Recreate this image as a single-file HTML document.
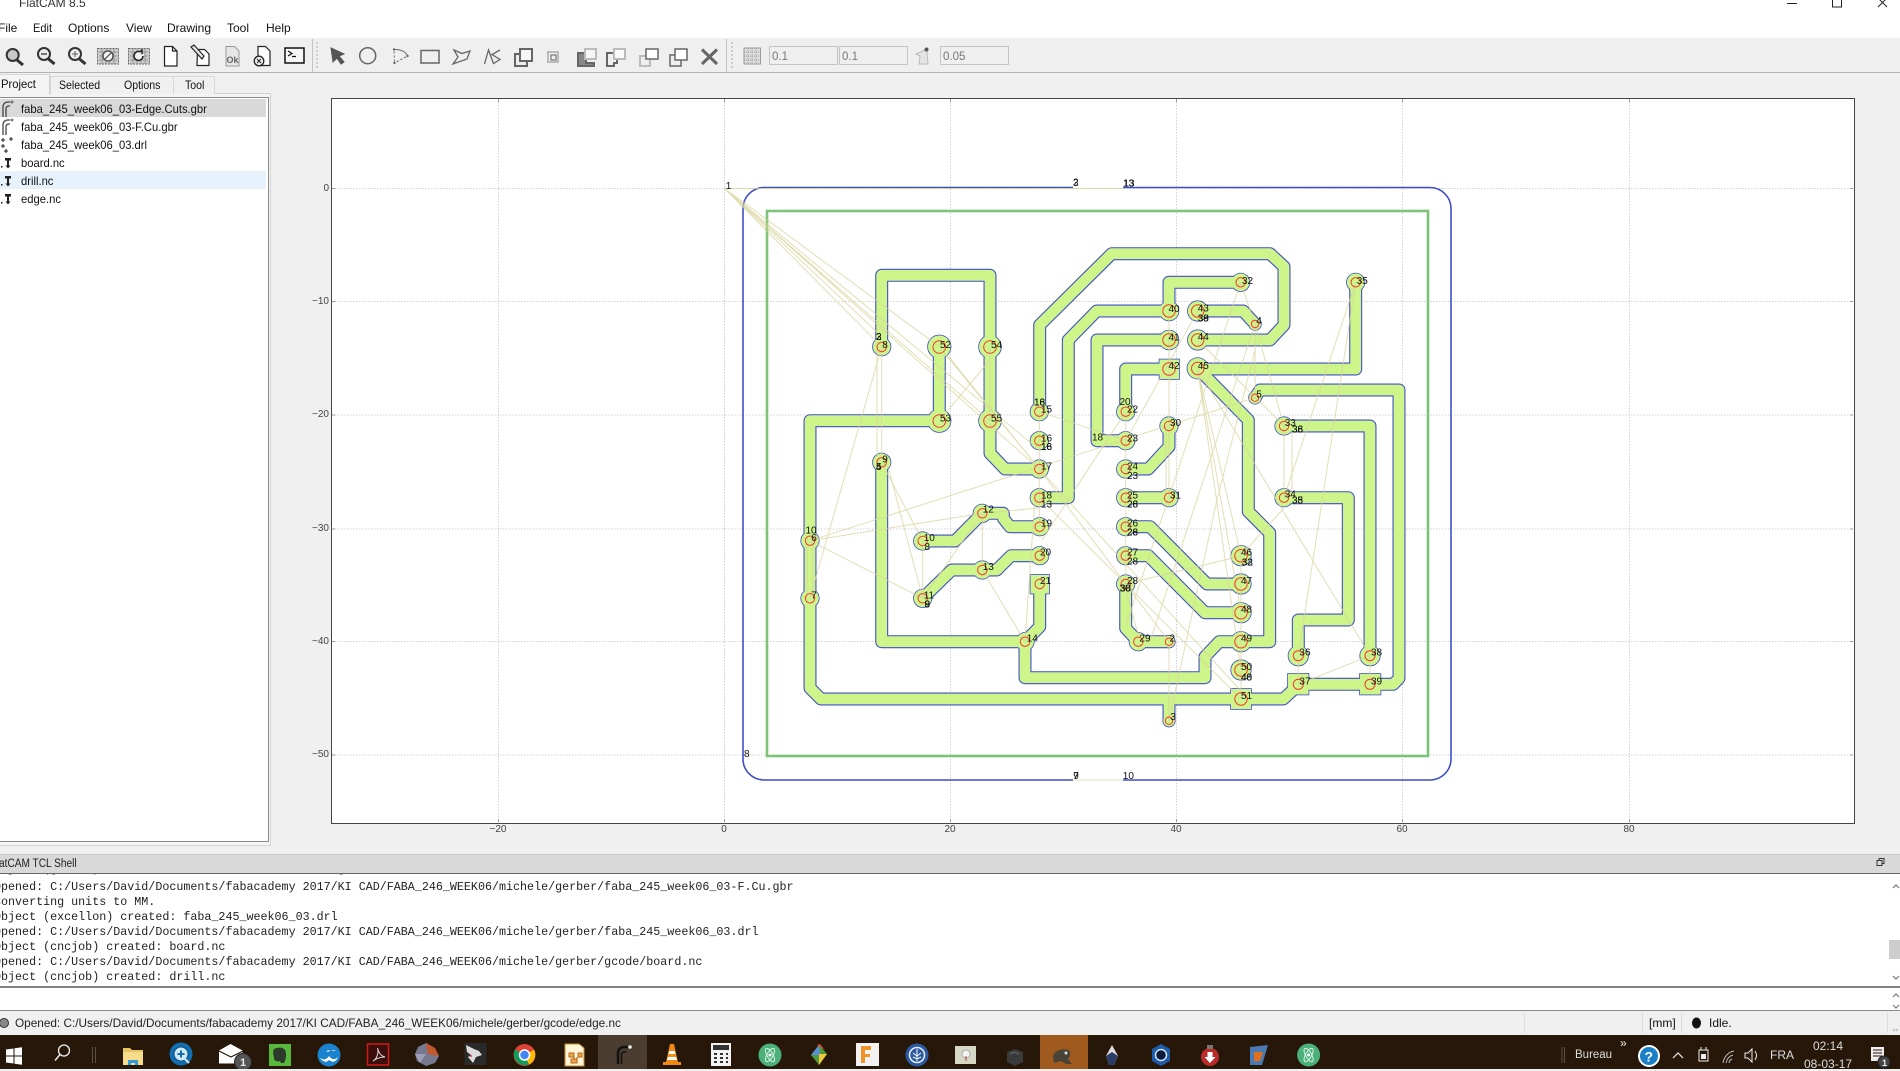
<!DOCTYPE html>
<html><head><meta charset="utf-8"><title>FlatCAM 8.5</title>
<style>
html,body{margin:0;padding:0;width:1900px;height:1069px;overflow:hidden;background:#f0f0f0;font-family:"Liberation Sans",sans-serif;font-size:12px;color:#111}
.a{position:absolute}
.t{position:absolute;white-space:nowrap;line-height:14px;height:14px;transform-origin:0 50%}
.m{position:absolute;left:-6px;white-space:pre;font-family:"Liberation Mono",monospace;font-size:11.7px;line-height:15px;height:15px;color:#222}
.r{transform:scaleX(.935)}
.b{transform:scaleX(.88)}
svg{position:absolute;left:0;top:0}
svg text{font-family:"Liberation Sans",sans-serif}
</style></head><body>
<!-- title + menu -->
<div class="a" style="left:0;top:0;width:1900px;height:38px;background:#fff"></div>
<div class="t" style="left:19px;top:-4px;font-size:12px;color:#333">FlatCAM 8.5</div>
<div class="t" style="left:-2px;top:21px">File</div>
<div class="t" style="left:33px;top:21px;transform:scaleX(.92)">Edit</div>
<div class="t" style="left:68px;top:21px">Options</div>
<div class="t" style="left:126px;top:21px">View</div>
<div class="t" style="left:167px;top:21px">Drawing</div>
<div class="t" style="left:227px;top:21px">Tool</div>
<div class="t" style="left:266px;top:21px">Help</div>
<!-- toolbar -->
<div class="a" style="left:0;top:39px;width:1900px;height:33px;background:#efefef;border-bottom:1px solid #b4b4b4"></div>
<div class="a" style="left:312px;top:39px;width:1px;height:33px;background:#c4c4c4"></div>
<div class="a" style="left:726px;top:39px;width:1px;height:33px;background:#c4c4c4"></div>
<div class="a" style="left:769px;top:46px;width:67px;height:17px;background:#efefef;border:1px solid #c4c4c4;color:#777;font-size:11.5px;line-height:20px;text-indent:2px">0.1</div>
<div class="a" style="left:839px;top:46px;width:67px;height:17px;background:#efefef;border:1px solid #c4c4c4;color:#777;font-size:11.5px;line-height:20px;text-indent:2px">0.1</div>
<div class="a" style="left:940px;top:46px;width:67px;height:17px;background:#efefef;border:1px solid #c4c4c4;color:#777;font-size:11.5px;line-height:20px;text-indent:2px">0.05</div>
<!-- tabs -->
<div class="a" style="left:0;top:93px;width:271px;height:753px;background:#f4f4f4;border-top:1px solid #d0d0d0;border-right:1px solid #d4d4d4;border-bottom:1px solid #d4d4d4;box-sizing:border-box"></div>
<div class="a" style="left:0;top:74px;width:49px;height:20px;background:#f4f4f4;border-right:1px solid #d0d0d0;border-top:1px solid #d8d8d8"></div>
<div class="a" style="left:50px;top:76px;width:62px;height:17px;background:#f0f0f0;border:1px solid #d8d8d8;border-bottom:0"></div>
<div class="a" style="left:113px;top:76px;width:60px;height:17px;background:#f0f0f0;border:1px solid #d8d8d8;border-bottom:0;border-left:0"></div>
<div class="a" style="left:174px;top:76px;width:40px;height:17px;background:#f0f0f0;border:1px solid #d8d8d8;border-bottom:0;border-left:0"></div>
<div class="t r" style="left:1px;top:77px">Project</div>
<div class="t b" style="left:59px;top:78px">Selected</div>
<div class="t b" style="left:124px;top:78px">Options</div>
<div class="t b" style="left:185px;top:78px">Tool</div>
<!-- tree -->
<div class="a" style="left:-1px;top:97px;width:268px;height:743px;background:#fff;border:1px solid #8a8a8a"></div>
<div class="a" style="left:0;top:99px;width:266px;height:18px;background:#d9d9d9"></div>
<div class="a" style="left:0;top:171px;width:266px;height:18px;background:#e5f1fb"></div>
<div class="t r" style="left:21px;top:102px">faba_245_week06_03-Edge.Cuts.gbr</div>
<div class="t r" style="left:21px;top:120px">faba_245_week06_03-F.Cu.gbr</div>
<div class="t r" style="left:21px;top:138px">faba_245_week06_03.drl</div>
<div class="t r" style="left:21px;top:156px">board.nc</div>
<div class="t r" style="left:21px;top:174px">drill.nc</div>
<div class="t r" style="left:21px;top:192px">edge.nc</div>
<!-- canvas -->
<div class="a" style="left:331px;top:98px;width:1522px;height:724px;background:#fff;border:1px solid #444"></div>
<div class="t" style="left:318px;top:182px;font-size:10px;color:#444;width:11px;text-align:right">0</div>
<div class="t" style="left:309px;top:295px;font-size:10px;color:#444;width:20px;text-align:right">−10</div>
<div class="t" style="left:309px;top:408px;font-size:10px;color:#444;width:20px;text-align:right">−20</div>
<div class="t" style="left:309px;top:522px;font-size:10px;color:#444;width:20px;text-align:right">−30</div>
<div class="t" style="left:309px;top:635px;font-size:10px;color:#444;width:20px;text-align:right">−40</div>
<div class="t" style="left:309px;top:748px;font-size:10px;color:#444;width:20px;text-align:right">−50</div>
<div class="t" style="left:488px;top:823px;font-size:10px;color:#444;width:20px;text-align:center">−20</div>
<div class="t" style="left:714px;top:823px;font-size:10px;color:#444;width:20px;text-align:center">0</div>
<div class="t" style="left:940px;top:823px;font-size:10px;color:#444;width:20px;text-align:center">20</div>
<div class="t" style="left:1166px;top:823px;font-size:10px;color:#444;width:20px;text-align:center">40</div>
<div class="t" style="left:1392px;top:823px;font-size:10px;color:#444;width:20px;text-align:center">60</div>
<div class="t" style="left:1619px;top:823px;font-size:10px;color:#444;width:20px;text-align:center">80</div>
<!-- shell -->
<div class="a" style="left:0;top:854px;width:1900px;height:19px;background:#d9d9d9;border-top:1px solid #c8c8c8;box-sizing:border-box"></div>
<div class="t b" style="left:-1px;top:857px;color:#222;font-size:11.5px">atCAM TCL Shell</div>
<div class="a" style="left:0;top:873px;width:1900px;height:115px;background:#fff;border-top:1px solid #666;border-bottom:2px solid #808080;box-sizing:border-box;overflow:hidden">
<div class="m" style="top:-12px">Object (gerber) created: faba_245_week06_03-F.Cu.gbr</div>
<div class="m" style="top:6px">Opened: C:/Users/David/Documents/fabacademy 2017/KI CAD/FABA_246_WEEK06/michele/gerber/faba_245_week06_03-F.Cu.gbr</div>
<div class="m" style="top:21px">Converting units to MM.</div>
<div class="m" style="top:36px">Object (excellon) created: faba_245_week06_03.drl</div>
<div class="m" style="top:51px">Opened: C:/Users/David/Documents/fabacademy 2017/KI CAD/FABA_246_WEEK06/michele/gerber/faba_245_week06_03.drl</div>
<div class="m" style="top:66px">Object (cncjob) created: board.nc</div>
<div class="m" style="top:81px">Opened: C:/Users/David/Documents/fabacademy 2017/KI CAD/FABA_246_WEEK06/michele/gerber/gcode/board.nc</div>
<div class="m" style="top:96px">Object (cncjob) created: drill.nc</div>
<div class="a" style="left:1889px;top:66px;width:11px;height:19px;background:#cdcdcd"></div>
</div>
<div class="a" style="left:0;top:988px;width:1900px;height:23px;background:#fff;border-bottom:1px solid #8a8a8a;box-sizing:border-box"></div>
<!-- status -->
<div class="t" style="left:15px;top:1016px;font-size:12px;color:#222;transform:scaleX(.982)">Opened: C:/Users/David/Documents/fabacademy 2017/KI CAD/FABA_246_WEEK06/michele/gerber/gcode/edge.nc</div>
<div class="a" style="left:1524px;top:1013px;width:1px;height:20px;background:#ddd"></div>
<div class="a" style="left:1642px;top:1013px;width:1px;height:20px;background:#ddd"></div>
<div class="a" style="left:1681px;top:1013px;width:1px;height:20px;background:#ddd"></div>
<div class="a" style="left:1887px;top:1013px;width:1px;height:20px;background:#ddd"></div>
<div class="t" style="left:1649px;top:1016px;color:#111">[mm]</div>
<div class="t" style="left:1709px;top:1016px;color:#111">Idle.</div>
<!-- taskbar -->
<div class="a" style="left:0;top:1035px;width:1900px;height:34px;background:#261708"></div>
<div class="a" style="left:598px;top:1035px;width:49px;height:34px;background:#4b3d2f"></div>
<div class="a" style="left:1040px;top:1035px;width:48px;height:34px;background:#a05a1e"></div>
<div class="t" style="left:1575px;top:1048px;color:#ddd;font-size:11.5px">Bureau</div>
<div class="t" style="left:1620px;top:1036px;color:#eee;font-size:12px">»</div>
<div class="t" style="left:1770px;top:1048px;color:#ddd;font-size:12px">FRA</div>
<div class="t" style="left:1813px;top:1039px;color:#ddd;font-size:12px">02:14</div>
<div class="t" style="left:1804px;top:1057px;color:#ddd;font-size:12px">08-03-17</div>

<svg width="1900" height="1069" viewBox="0 0 1900 1069" fill="none">
<!-- window buttons -->
<path d="M1787 3.500h10M1832.500 -2h9v9h-9zM1878 -2l9 9M1887 -2l-9 9" stroke="#222" stroke-width="1"/>
<!-- toolbar left icons -->
<g stroke="#333" stroke-width="2">
<circle cx="12.700" cy="55" r="6" fill="#c8c8c8"/><path d="M17 60l6 5" stroke-width="3"/>
<circle cx="44" cy="54" r="6" fill="#eee"/><path d="M48.500 59l6 5" stroke-width="3"/><path d="M41 54h6" stroke-width="1.300"/>
<circle cx="75" cy="54" r="6" fill="#eee"/><path d="M79.500 59l6 5" stroke-width="3"/><path d="M72 54h6M75 51v6" stroke-width="1.300" stroke="#777"/>
</g>
<rect x="97.500" y="48.500" width="21" height="15.500" fill="#ccc" stroke="#666" stroke-dasharray="2 1"/>
<path d="M99 52h18M99 56h18M99 60h18M102 49v15M106 49v15M110 49v15M114 49v15" stroke="#888" stroke-width=".7"/>
<circle cx="108" cy="56" r="5" fill="#f4f4f4" stroke="#444" stroke-width="1.300"/><path d="M105 59l6-6" stroke="#444" stroke-width="1.200"/>
<rect x="128.500" y="48.500" width="21" height="15.500" fill="#ccc" stroke="#666" stroke-dasharray="2 1"/>
<path d="M130 52h18M130 56h18M130 60h18M133 49v15M137 49v15M141 49v15M145 49v15" stroke="#888" stroke-width=".7"/>
<circle cx="139" cy="56" r="5" fill="#eee"/><path d="M143 56a4.500 4.500 0 1 1-3-4.300l2-1.500v4" stroke="#222" stroke-width="1.500"/>
<path d="M164.500 46.500h8l4.500 4.500v15h-12.500zM172.500 46.500v4.500h4.500" fill="#fff" stroke="#222" stroke-width="1.200"/>
<path d="M197.500 49.500h7l4.500 4.500v11.500h-12z" fill="#fff" stroke="#222" stroke-width="1.200"/>
<path d="M191 47l3-2 10 11-2 3z" fill="#e8e8e8" stroke="#222" stroke-width="1.200"/>
<path d="M226 46.500h8.500l4.500 4.500v15h-13z" fill="#e6e6e6" stroke="#999"/>
<text x="226.500" y="63" font-size="9" font-weight="bold" fill="#666">Ok</text>
<path d="M258 46.500h7.500l4.500 4.500v14.500h-12z" fill="#fff" stroke="#222" stroke-width="1.200"/>
<circle cx="259" cy="61" r="4.800" fill="#eee" stroke="#222" stroke-width="1.300"/><path d="M257 59l4 4M261 59l-4 4" stroke="#222"/>
<rect x="285" y="48" width="19" height="15" fill="#f6f6f6" stroke="#111" stroke-width="1.500"/>
<path d="M288 51l4 2.500-4 2.500M292 56.500h4" stroke="#111" stroke-width="1.200"/>
<path d="M317 42v28" stroke="#aaa" stroke-dasharray="2 2"/>
<path d="M732 42v28" stroke="#aaa" stroke-dasharray="2 2"/>
<!-- toolbar draw icons -->
<path d="M331 48l13 6-5 2 5 6-3 2-4-6-4 4z" fill="#555" stroke="#555"/>
<g stroke="#666" stroke-width="1.500">
<circle cx="367.700" cy="55.700" r="8"/>
<path d="M394 49.500C401 49 406 52 407.500 56M407.500 56L394.500 63M394 49.500L394.500 63" stroke-width="1" stroke-dasharray="0"/>
<path d="M394 49.500L394.500 63M407.500 56L394.500 63" stroke="#efefef" stroke-width="1.400" stroke-dasharray="2 2"/>
<circle cx="394" cy="49.500" r="1.200" fill="#666" stroke="none"/><circle cx="407.500" cy="56" r="1.200" fill="#666" stroke="none"/><circle cx="394.500" cy="63" r="1.200" fill="#666" stroke="none"/>
<rect x="421" y="50.500" width="18" height="12.500"/>
<path d="M454 50l8 3.500 8-2.500-3 8-14 5 5-7z" stroke-width="1.300"/>
<path d="M484.500 64l4-14 5 13.500 6.500-4-8-5 8-4.500" stroke-width="1.300"/>
</g>
<g stroke="#666" stroke-width="2">
<rect x="515" y="54" width="12" height="12" fill="#eee"/><rect x="520" y="49" width="12" height="12" fill="#f6f6f6"/>
<rect x="548" y="52" width="10" height="10" stroke="#bbb" fill="#eee"/><rect x="551" y="55" width="5" height="5" stroke-width="1.200" stroke="#777"/>
<path d="M578 53h8v10h8v3h-16z" fill="#888" stroke="#666"/><rect x="585" y="49" width="11" height="10" fill="#f6f6f6" stroke="#bbb"/>
<path d="M609 53h8v10h-3v3h-7v-13z" fill="#f0f0f0" stroke="#666"/><rect x="614" y="49" width="11" height="10" fill="#fafafa" stroke="#bbb"/>
<rect x="640" y="56" width="10" height="10" fill="#eee" stroke="#bbb"/><rect x="646" y="49" width="12" height="10" fill="#fff" stroke="#666" stroke-width="1.500"/>
<rect x="670" y="55" width="11" height="11" fill="#eee" stroke="#666" stroke-width="1.500"/><rect x="675" y="49" width="12" height="11" fill="#fff" stroke="#666" stroke-width="1.500"/>
<path d="M702 49.500l15 14.500M717 49.500l-15 14.500" stroke-width="3"/>
</g>
<rect x="744" y="48" width="16.500" height="16" fill="#ddd" stroke="#999"/>
<path d="M744 52h16M744 56h16M744 60h16M748 48v16M752 48v16M756 48v16" stroke="#888" stroke-width=".7" stroke-dasharray="1 1"/>
<path d="M916 54l9-4 2 2 1 12h-9l1-8z" fill="#e4e4e4" stroke="#bbb"/><circle cx="926.500" cy="49.500" r="2" fill="#555"/>
<!-- tree icons -->
<g stroke="#444" stroke-width="1.300">
<path d="M3 117v-10c0-3 2-5 5-5h2M6 117v-8c0-2 1-3 3-3h1" /><circle cx="12" cy="102" r="1" stroke-width=".8"/>
<path d="M3 135v-10c0-3 2-5 5-5h2M6 135v-8c0-2 1-3 3-3h1"/><circle cx="12" cy="120" r="1" stroke-width=".8"/>
</g>
<path d="M1 140h4M3 138v4M9 139h4M11 137v4M1 146h4M3 144v4M4 151h4M6 149v4" stroke="#222" stroke-width="1"/>
<g fill="#222"><path d="M5 158h6v2.500h-2v5h1.500l-2.500 3-2.500-3H7v-5H5z"/><rect x="1" y="166" width="1.500" height="1.500"/>
<path d="M5 176h6v2.500h-2v5h1.500l-2.500 3-2.500-3H7v-5H5z"/><rect x="1" y="184" width="1.500" height="1.500"/>
<path d="M5 194h6v2.500h-2v5h1.500l-2.500 3-2.500-3H7v-5H5z"/><rect x="1" y="202" width="1.500" height="1.500"/></g>
<!-- grid -->
<g stroke="#d2d2d2" stroke-width="1" stroke-dasharray="1.500 1.500">
<path d="M498.500 99V822M724.500 99V822M950.500 99V822M1176.500 99V822M1402.500 99V822M1629.500 99V822"/>
<path d="M332 188.500H1853M332 301.500H1853M332 415H1853M332 529H1853M332 641.500H1853M332 755H1853"/>
</g>
<g stroke="#999" stroke-width="1"><path d="M498.500 99v3M724.500 99v3M950.500 99v3M1176.500 99v3M1402.500 99v3M1629.500 99v3M498.500 819v3M724.500 819v3M950.500 819v3M1176.500 819v3M1402.500 819v3M1629.500 819v3M332 188.500h3M1850 188.500h3M332 301.500h3M1850 301.500h3M332 415h3M1850 415h3M332 529h3M1850 529h3M332 641.500h3M1850 641.500h3M332 755h3M1850 755h3"/></g>
<!-- board outlines -->
<rect x="767" y="211" width="661" height="545" stroke="#c4e6bc" stroke-width="3.400"/>
<rect x="767" y="211" width="661" height="545" stroke="#72bb72" stroke-width="1.700"/>
<path d="M1073 187.500H764a21 21 0 0 0-21 21V759a21 21 0 0 0 21 21H1073M1123 780H1430a21 21 0 0 0 21-21V208.500a21 21 0 0 0-21-21H1123" stroke="#3f4fc8" stroke-width="1.600"/>
<defs>
<g id="tr" stroke-linejoin="round" stroke-linecap="round">
<path d="M881.700 346.700V275.300H990V420.700V453.300L1005 469H1039.300"/>
<path d="M939.300 346.700V420.700H810V688L821 699H1241H1283.300L1296.700 686.700L1298.300 684.300H1370H1393.300L1399 678.300V390H1260L1255 397.700"/>
<path d="M1169 720.700V699"/>
<path d="M881.700 462.300V641.700H1025V677.700H1205V656.700L1219.300 641.700H1269.700V533L1248.300 511.500V420L1197.700 368.300"/>
<path d="M1025 641.700L1039.700 626.700V584"/>
<path d="M922.700 541H955L982.300 513.300H1003.300V518.300L1010 526.700H1039.700"/>
<path d="M922.700 598.300L951.700 570H996.700L1011 555.700H1039.700"/>
<path d="M1039.700 411.700V325L1111.700 253.700H1270L1284 266.700V325L1270 340H1197.700"/>
<path d="M1039.300 497.700H1068.300V340L1096.700 311H1169V282.300H1240.700"/>
<path d="M1169 340H1097V440.700H1125.700"/>
<path d="M1169 369H1125.700V411.700"/>
<path d="M1197.700 311H1243.300L1255 324"/>
<path d="M1197.700 369H1355.700V282.300"/>
<path d="M1169 426V446.700L1148.300 469H1125.700"/>
<path d="M1125.700 497.700H1169"/>
<path d="M1125.700 526.700H1150L1207 584H1241"/>
<path d="M1125.700 555.700H1148.300L1205 612.700H1241"/>
<path d="M1125.700 584V628.300L1138.300 641.700H1169"/>
<path d="M1284 426H1370V655.700"/>
<path d="M1284 497.700H1348.300V620H1298.300V655.700"/>
</g>
<g id="pd">
<circle cx="881.700" cy="346.700" r="8.800"/><circle cx="939.300" cy="346.700" r="11.300"/><circle cx="990" cy="346.700" r="11"/><circle cx="939.300" cy="420.700" r="11.300"/><circle cx="990" cy="420.700" r="11"/>
<circle cx="1039.300" cy="411.700" r="8.800"/><circle cx="1039.300" cy="440.700" r="8.800"/><circle cx="1039.300" cy="469" r="8.800"/><circle cx="1039.300" cy="497.700" r="8.800"/>
<circle cx="881.700" cy="462.300" r="8.800"/><circle cx="810" cy="540.700" r="8.800"/><circle cx="810" cy="598.300" r="8.800"/>
<circle cx="922.700" cy="541" r="8.800"/><circle cx="922.700" cy="598.300" r="8.800"/><circle cx="982.300" cy="513.300" r="8.800"/><circle cx="982.300" cy="570" r="8.800"/>
<circle cx="1039.700" cy="526.700" r="8.800"/><circle cx="1039.700" cy="555.700" r="8.800"/><circle cx="1025" cy="641.700" r="8.800"/>
<rect x="1030.500" y="575" width="18.500" height="18.500"/>
<circle cx="1169" cy="311" r="9.500"/><circle cx="1169" cy="340" r="9.500"/><rect x="1159.500" y="359.500" width="19.500" height="19.500"/>
<circle cx="1197.700" cy="311" r="9.800"/><circle cx="1197.700" cy="340" r="9.800"/><circle cx="1197.700" cy="368.300" r="10.300"/>
<circle cx="1240.700" cy="282.300" r="8.800"/><circle cx="1255" cy="324" r="6"/><circle cx="1255" cy="397.700" r="6"/>
<circle cx="1125.700" cy="411.700" r="8.800"/><circle cx="1125.700" cy="440.700" r="8.800"/><circle cx="1125.700" cy="469" r="8.800"/><circle cx="1125.700" cy="497.700" r="8.800"/><circle cx="1125.700" cy="526.700" r="8.800"/><circle cx="1125.700" cy="555.700" r="8.800"/><circle cx="1125.700" cy="584" r="8.800"/>
<circle cx="1169" cy="426" r="8.800"/><circle cx="1169" cy="497.700" r="8.800"/><circle cx="1138.300" cy="641.700" r="8.800"/><circle cx="1169" cy="641.700" r="5.800"/><circle cx="1169" cy="720.700" r="5.800"/>
<circle cx="1241" cy="555.700" r="9.800"/><circle cx="1241" cy="584" r="9.800"/><circle cx="1241" cy="612.700" r="9.800"/><circle cx="1241" cy="641.700" r="9.800"/><circle cx="1241" cy="670" r="9.800"/>
<rect x="1231" y="689" width="20" height="20"/>
<circle cx="1284" cy="426" r="8.800"/><circle cx="1284" cy="497.700" r="8.800"/><circle cx="1355.700" cy="282.300" r="8.800"/>
<circle cx="1298.300" cy="655.700" r="9.800"/><circle cx="1370" cy="655.700" r="9.800"/>
<rect x="1288" y="674" width="20.500" height="20.500"/><rect x="1360" y="674" width="20.500" height="20.500"/>
</g>
</defs>
<!-- traces -->
<use href="#tr" stroke="#3f4fc8" stroke-width="13"/>
<use href="#pd" fill="#3f4fc8" stroke="#3f4fc8" stroke-width="1.600"/>
<use href="#tr" stroke="#cdf58a" stroke-width="10.800"/>
<use href="#pd" fill="#cdf58a"/>
<!-- ratsnest -->
<g stroke="#d9d49c" stroke-width="1" opacity=".75">
<path d="M724 188.500L1123 188.500M1073 780H1123"/>
<path d="M724 188L881.700 346.700M724 188L880 335M724 188L939.300 346.700M724 188L990 420.700M724 188L1039.300 469M724 188L1039.300 450"/>
<path d="M881.700 346.700L810 598.300M877 346.700V462.300M881.700 346.700V462.300M881.700 462.300L922.700 541M889 470L922.700 598.300"/>
<path d="M810 540.700L1255 397.700M810 540.700L982.300 513.300L1039.700 508M810 540.700L922.700 598.300M807 540.700V598.300M813 540.700V598.300"/>
<path d="M922.700 541V598.300M982.300 513.300V570M982.300 570L1025 641.700M1035 497.700L1025 641.700M922.700 598.300L982.300 513.300"/>
<path d="M949 357L1039.300 469M990 360L939.300 420.700M939.300 346.700L1039.300 469M990 346.700V420.700"/>
<path d="M1039.300 411.700L1125.700 440.700M1125.700 411.700L1042 540M1125.700 411.700V584M1039.300 411.700V526.700M1169 311V369M1169 340V497.700M1197.700 311L1125.700 440.700M1166 426V497.700"/>
<path d="M1240.700 282.300L1125.700 626M1255 324L1150 641.700M1255 324V397.700M1255 324L1284 426M1197.700 340L1284 426M1240.700 282.300L1255 324"/>
<path d="M1197.700 369L1241 555.700M1197.700 369L1241 612.700M1197.700 369L1241 670M1197.700 369L1370 655.700"/>
<path d="M1355.700 282.300L1284 497.700M1355.700 282.300L1298.300 655.700M1169 720L1217 500L1255 350"/>
<path d="M1284 426V497.700M1292 432V497.700M1284 508L1241 555.700M1125.700 584L1241 556M1298.300 684.300L1370 655.700"/>
<path d="M1039.300 497.700L1241 699M1039.300 469L1240 690M1039.300 469L1169 641.700M1169 641.700V720.700M1241 555.700V699M1298.300 655.700V684.300M1370 655.700V684.300M1125.700 584L1169 641.700M1140 641L1125.700 590"/>
</g>
<!-- drills -->
<g stroke="#f03a2a" stroke-width="1">
<circle cx="881.700" cy="347" r="4.700"/><circle cx="939.300" cy="347" r="6.300"/><circle cx="990" cy="347" r="6.300"/><circle cx="939.300" cy="421" r="6.300"/><circle cx="990" cy="421" r="6.300"/>
<circle cx="1039.300" cy="411.700" r="4.700"/><circle cx="1039.300" cy="440.700" r="4.700"/><circle cx="1039.300" cy="469" r="4.700"/><circle cx="1039.300" cy="497.700" r="4.700"/>
<circle cx="881.700" cy="462.300" r="4.700"/><circle cx="810" cy="540.700" r="4.700"/><circle cx="810" cy="598.300" r="4.700"/><circle cx="922.700" cy="541" r="4.700"/><circle cx="922.700" cy="598.300" r="4.700"/><circle cx="982.300" cy="513.300" r="4.700"/><circle cx="982.300" cy="570" r="4.700"/>
<circle cx="1039.700" cy="526.700" r="4.700"/><circle cx="1039.700" cy="555.700" r="4.700"/><circle cx="1039.700" cy="584" r="4.700"/><circle cx="1025" cy="641.700" r="4.700"/>
<circle cx="1169" cy="311" r="6.200"/><circle cx="1169" cy="340" r="6.200"/><circle cx="1169" cy="369" r="6.200"/><circle cx="1197.700" cy="311" r="6.200"/><circle cx="1197.700" cy="340" r="6.200"/><circle cx="1197.700" cy="368.500" r="6.200"/>
<circle cx="1240.700" cy="282.300" r="4.700"/><circle cx="1255" cy="324" r="3.700"/><circle cx="1255" cy="397.700" r="3.700"/><circle cx="1355.700" cy="282.300" r="4.700"/>
<circle cx="1125.700" cy="411.700" r="4.700"/><circle cx="1125.700" cy="440.700" r="4.700"/><circle cx="1125.700" cy="469" r="4.700"/><circle cx="1125.700" cy="497.700" r="4.700"/><circle cx="1125.700" cy="526.700" r="4.700"/><circle cx="1125.700" cy="555.700" r="4.700"/><circle cx="1125.700" cy="584" r="4.700"/>
<circle cx="1169" cy="426" r="4.700"/><circle cx="1169" cy="497.700" r="4.700"/><circle cx="1138.300" cy="641.700" r="4.700"/><circle cx="1169" cy="641.700" r="3.700"/><circle cx="1169" cy="720.700" r="3.700"/>
<circle cx="1241" cy="555.700" r="6.200"/><circle cx="1241" cy="584" r="6.200"/><circle cx="1241" cy="612.700" r="6.200"/><circle cx="1241" cy="641.700" r="6.200"/><circle cx="1241" cy="670" r="6.200"/><circle cx="1241" cy="699" r="6.200"/>
<circle cx="1284" cy="426" r="4.700"/><circle cx="1284" cy="497.700" r="4.700"/><circle cx="1298.300" cy="655.700" r="5"/><circle cx="1370" cy="655.700" r="5"/><circle cx="1298.300" cy="684.300" r="5"/><circle cx="1370" cy="684.300" r="5"/>
</g>
<!-- labels -->
<g fill="#111" font-size="10">
<text x="725.700" y="189">1</text><text x="1073" y="186">3</text><text x="1073" y="185.500">2</text><text x="1123" y="186.500">13</text><text x="1123.500" y="186.500">13</text>
<text x="744" y="757">8</text><text x="1073.300" y="779">9</text><text x="1073.300" y="779">7</text><text x="1122.800" y="779">10</text>
<text x="882.200" y="348">8</text><text x="876" y="340">3</text><text x="876" y="340">2</text><text x="940" y="348">52</text><text x="991" y="348">54</text><text x="940" y="421.500">53</text><text x="991" y="421.500">55</text>
<text x="1034" y="405.300">16</text><text x="1034" y="405.300">18</text><text x="1041" y="412.700">15</text><text x="1041" y="441.700">16</text><text x="1041" y="450">18</text><text x="1041" y="450">16</text><text x="1041" y="469.300">17</text><text x="1041" y="498.300">18</text><text x="1041" y="507.300">13</text>
<text x="882.200" y="462.700">9</text><text x="876" y="470">5</text><text x="876" y="470">4</text>
<text x="1168.500" y="312">40</text><text x="1197.700" y="311.700">43</text><text x="1197.700" y="321.700">38</text><text x="1197.700" y="321.700">39</text><text x="1168.500" y="340.700">41</text><text x="1197.700" y="340">44</text><text x="1168.500" y="369">42</text><text x="1197.700" y="369">45</text><text x="1242" y="284">32</text><text x="1256.200" y="324">4</text><text x="1256.200" y="397.700">5</text>
<text x="1119.500" y="405">20</text><text x="1127" y="412.700">22</text><text x="1092" y="440.700">18</text><text x="1127" y="441.700">23</text><text x="1127" y="469.300">24</text><text x="1127" y="479">23</text><text x="1127" y="498.300">25</text><text x="1127" y="507.300">26</text><text x="1127" y="507.300">28</text><text x="1170" y="426">30</text><text x="1170" y="498.300">31</text>
<text x="1356.700" y="284">35</text><text x="1284.700" y="426">33</text><text x="1292" y="432.300">38</text><text x="1292" y="432.300">36</text><text x="1284.700" y="497.700">34</text><text x="1292" y="503.300">35</text><text x="1292" y="503.300">38</text>
<text x="805.500" y="533.300">10</text><text x="811.200" y="541">6</text><text x="811.200" y="598.300">7</text><text x="923.700" y="541">10</text><text x="924.500" y="550">8</text><text x="923.700" y="598.300">11</text><text x="924.500" y="607.300">8</text><text x="924.500" y="607.300">9</text>
<text x="982.700" y="512.700">12</text><text x="982.700" y="570">13</text><text x="1041" y="526.700">19</text><text x="1040" y="555.700">20</text><text x="1040" y="584">21</text><text x="1026.700" y="641.300">14</text>
<text x="1127" y="526.700">26</text><text x="1127" y="535.700">26</text><text x="1127" y="535.700">28</text><text x="1127" y="555.700">27</text><text x="1127" y="564.700">28</text><text x="1127" y="584">28</text><text x="1119.500" y="591.700">30</text><text x="1120" y="591.700">38</text><text x="1139.400" y="641.700">29</text><text x="1169.500" y="641.700">2</text><text x="1170.200" y="720">3</text>
<text x="1241" y="555.700">46</text><text x="1241.700" y="565.700">32</text><text x="1241.700" y="565.700">33</text><text x="1241" y="584">47</text><text x="1241" y="612.700">48</text><text x="1241" y="641.700">49</text><text x="1241" y="670">50</text><text x="1241" y="680.700">40</text><text x="1241" y="680.700">48</text><text x="1241" y="699">51</text>
<text x="1299.400" y="655.700">36</text><text x="1371" y="655.700">38</text><text x="1299.400" y="684.300">37</text><text x="1371" y="684.300">39</text>
</g>
<!-- shell misc -->
<path d="M1877 860.500h5v5h-5zM1879 860.500v-2h5v5h-2" stroke="#333" fill="#d9d9d9"/>
<g stroke="#777" stroke-width="1.200"><path d="M1893 888l3-3 3 3M1893 976l3 3 3-3M1893 997l3-3 3 3M1893 1005l3 3 3-3"/></g>
<circle cx="4" cy="1023" r="4.500" fill="#888" stroke="#333"/>
<ellipse cx="1696.500" cy="1023" rx="4.500" ry="5.500" fill="#111"/>
<path d="M1893 1031l2-2M1896 1031l2-2" stroke="#aaa"/>
<!-- taskbar icons -->
<g>
<path d="M6 1049.500l7.500-1v7h-7.500zM14.500 1048.300l7.500-1.100v8.300h-7.500zM6 1056.500h7.500v7l-7.500-1zM14.500 1056.500h7.500v8.300l-7.500-1.100z" fill="#fff"/>
<circle cx="64" cy="1050.500" r="5.500" stroke="#eee" stroke-width="1.300"/><path d="M60 1054.500l-5 6" stroke="#eee" stroke-width="1.500"/>
<path d="M92.500 1047v16M95.500 1047v16" stroke="#5c5044"/>
<path d="M123 1048h7l2 2h11v6h-20z" fill="#e8c560"/><path d="M123 1052h20v13h-20z" fill="#f7dd8b"/><path d="M128 1060h10v5h-3v-2h-4v2h-3z" fill="#2f9ad6"/>
<circle cx="181" cy="1054" r="11.500" fill="#0f6fb0"/><circle cx="181" cy="1054" r="7" fill="#cfe9f7" stroke="#0d4f80" stroke-width="1"/><path d="M177.500 1054h7M181 1050.500v7" stroke="#0f6fb0" stroke-width="2"/><path d="M185 1059l4 4" stroke="#cfe9f7" stroke-width="2"/>
<path d="M219 1050.500l11.500-6.500 12 6.500v13h-23.500z" fill="#fff"/><path d="M219 1051l12 6 12-6" stroke="#261708" stroke-width="1.200"/>
<circle cx="243" cy="1062" r="8.500" fill="#555" stroke="#222"/><text x="240" y="1066" font-size="11" font-weight="bold" fill="#eee">1</text>
<rect x="269" y="1044" width="22" height="22" fill="#57b83d"/><path d="M274 1049c4-2 9-2 11 1 2 4 1 9-1 13h-3l-1-2c-3 1-6 0-6-3 0-3-2-5 0-9z" fill="#2d3a2a"/>
<circle cx="329" cy="1055" r="11.500" fill="#1b82cf"/><path d="M320 1058c4 2 6 2 9-2 3 4 6 4 9 1-2 5-5 6-9 3-3 3-6 2-9-2zM326 1051l5-1-3 2zM332 1050l4 0-3 1z" fill="#fff"/>
<rect x="367.500" y="1044" width="21" height="21" fill="#3b0d0d" stroke="#d21919" stroke-width="1.500"/><path d="M373 1061c4-2 6-9 4.500-13 1 4 3 8 7.500 9-4 0-8 1-12 4z" stroke="#ddd" stroke-width="1"/>
<path d="M426 1043l9 5 4 8-4 7-9 3-9-5-2-7 3-7z" fill="#77788e"/><path d="M426 1043l9 5 4 8-11-2z" fill="#c4572c"/><path d="M415 1054l11 0-6 9z" fill="#9ea0b8"/>
<rect x="464.500" y="1043" width="22" height="22" fill="#2a2a2a"/><path d="M466 1045l8 4 5 2 3 4-6 2-3 6-5-6 3-2-4-3z" fill="#ddd"/><circle cx="471" cy="1056" r="1" fill="#e03060"/>
<circle cx="524.500" cy="1055" r="11" fill="#db4437"/><path d="M534 1049.500a11 11 0 0 1-5 15l-4.500-9z" fill="#fbbc05"/><path d="M515 1049.500a11 11 0 0 0 14 15l-4.500-9.500z" fill="#0f9d58"/><circle cx="524.500" cy="1055" r="5" fill="#4285f4" stroke="#fff" stroke-width="1.500"/>
<path d="M565 1044h14l5 4v18h-19z" fill="#fff4d8" stroke="#c98a2a"/><path d="M569 1053h5v4h-5zM578 1053h4v4h-4zM571 1059h6v4h-6zM573 1057l2 2M578 1057l-2 2" stroke="#b46a1a" fill="#e6a548"/>
<path d="M618 1064v-11c0-4 3-6 6-6h4" stroke="#111" stroke-width="2.500"/><path d="M621.500 1064v-9c0-2 1-3 3-3h2" stroke="#111" stroke-width="1.500"/><circle cx="630" cy="1047" r="1.800" fill="#eee"/>
<path d="M666 1062l4-18h4l4 18h3v3h-18v-3z" fill="#f08a14"/><path d="M669.500 1051h5l1 3h-7zM668 1057h8l1 3h-10z" fill="#fff"/>
<rect x="711" y="1043" width="20" height="23" fill="#f3f3f3"/><rect x="713" y="1045" width="16" height="5" fill="#333"/><path d="M714 1053h3v2h-3zM720 1053h3v2h-3zM726 1053h2v2h-2zM714 1057h3v2h-3zM720 1057h3v2h-3zM726 1057h2v2h-2zM714 1061h3v2h-3zM720 1061h3v2h-3zM726 1061h2v2h-2z" fill="#333"/>
<circle cx="770" cy="1055" r="11.500" fill="#4cb07a"/><ellipse cx="770" cy="1055" rx="7.500" ry="3" stroke="#d8f2e2" transform="rotate(60 770 1055)"/><ellipse cx="770" cy="1055" rx="7.500" ry="3" stroke="#d8f2e2" transform="rotate(-60 770 1055)"/><circle cx="770" cy="1055" r="1.500" fill="#fff"/>
<path d="M819 1045l8 9-8 11-8-10z" fill="#4f9a3a"/><path d="M811 1055l8-10 1 10z" fill="#5b8fd8"/><path d="M819 1065l8-11h-8z" fill="#f0c840"/><path d="M817 1045l3-1 5 6z" fill="#d84a32"/>
<rect x="856" y="1043" width="23" height="23" fill="#f2f2f2"/><path d="M861 1046h10v4h-6v4h5v3h-5v6h-4z" fill="#f0932a"/>
<circle cx="917" cy="1055" r="11.500" fill="#2c5aa0"/><circle cx="917" cy="1055" r="7.500" stroke="#e8eef8" stroke-width="1.500"/><path d="M917 1049v12M913 1053l4 3 4-3M913 1057l4 2 4-2" stroke="#fff"/>
<rect x="955" y="1046" width="21" height="18" fill="#d5d8c2"/><circle cx="966" cy="1054" r="4" fill="#f3f3f3" stroke="#aaa"/><path d="M966 1056v5" stroke="#c33"/>
<path d="M1007 1052l8-3 8 3v10l-8 4-8-4z" fill="#3a3a3a"/><path d="M1010 1054l4-2 5 2" stroke="#666"/>
<path d="M1053 1056c2-6 10-8 15-6 3 1 3 6 0 9l4 5h-6l-5-3-7 2z" fill="#4a4438"/><circle cx="1066" cy="1053" r="1.500" fill="#ddd"/>
<path d="M1112 1045l6 11-4 9h-5l-3-9z" fill="#ddd"/><path d="M1112 1052l6 4-4 9h-5l-3-9z" fill="#2b3c66"/>
<path d="M1161 1044l9 5v12l-9 5-9-5v-12z" fill="#1e5aa8"/><circle cx="1161" cy="1055" r="5.500" fill="#0a1a38" stroke="#cfe4ff" stroke-width="1.500"/>
<circle cx="1210" cy="1057" r="9" fill="#b92b2b"/><rect x="1207" y="1045" width="6" height="4" fill="#777"/><path d="M1207.500 1052h5v5h3l-5.500 6-5.500-6h3z" fill="#fff"/>
<path d="M1250 1047l18 -2-6 20-12 0z" fill="#4a7ab0"/><path d="M1254 1052h9l-3 9h-6z" fill="#e07020"/>
<circle cx="1308.600" cy="1055" r="11.500" fill="#4cb07a"/><ellipse cx="1308.600" cy="1055" rx="7.500" ry="3" stroke="#d8f2e2" transform="rotate(60 1308.600 1055)"/><ellipse cx="1308.600" cy="1055" rx="7.500" ry="3" stroke="#d8f2e2" transform="rotate(-60 1308.600 1055)"/><circle cx="1308.600" cy="1055" r="1.500" fill="#fff"/>
<path d="M1562 1047v16M1564.500 1047v16" stroke="#5c5044"/>
<circle cx="1649" cy="1056" r="11" fill="#fff"/><circle cx="1649" cy="1056" r="9" fill="#1a7fc7"/><text x="1644.500" y="1061.500" font-size="14" font-weight="bold" fill="#fff">?</text>
<path d="M1673 1058l5-5 5 5" stroke="#eee" stroke-width="1.200"/>
<rect x="1699" y="1050" width="9" height="11" stroke="#eee"/><rect x="1701" y="1054" width="5" height="5" fill="#eee"/><path d="M1701 1047v3M1706 1047v3" stroke="#eee"/>
<path d="M1723 1063c1-6 5-11 11-12M1726 1063c1-4 3-7 7-8M1729 1063c0-2 1-3 3-4" stroke="#bbb"/>
<path d="M1745 1053h3l4-4v13l-4-4h-3zM1755 1051c2 3 2 6 0 9" stroke="#eee" stroke-width="1"/>
<rect x="1871" y="1047" width="13" height="14" fill="#eee"/><path d="M1873 1050h9M1873 1053h9M1873 1056h9" stroke="#261708"/>
<circle cx="1884" cy="1062" r="6" fill="#444" stroke="#222"/><text x="1882" y="1066" font-size="9" font-weight="bold" fill="#eee">1</text>
</g>
</svg>
</body></html>
